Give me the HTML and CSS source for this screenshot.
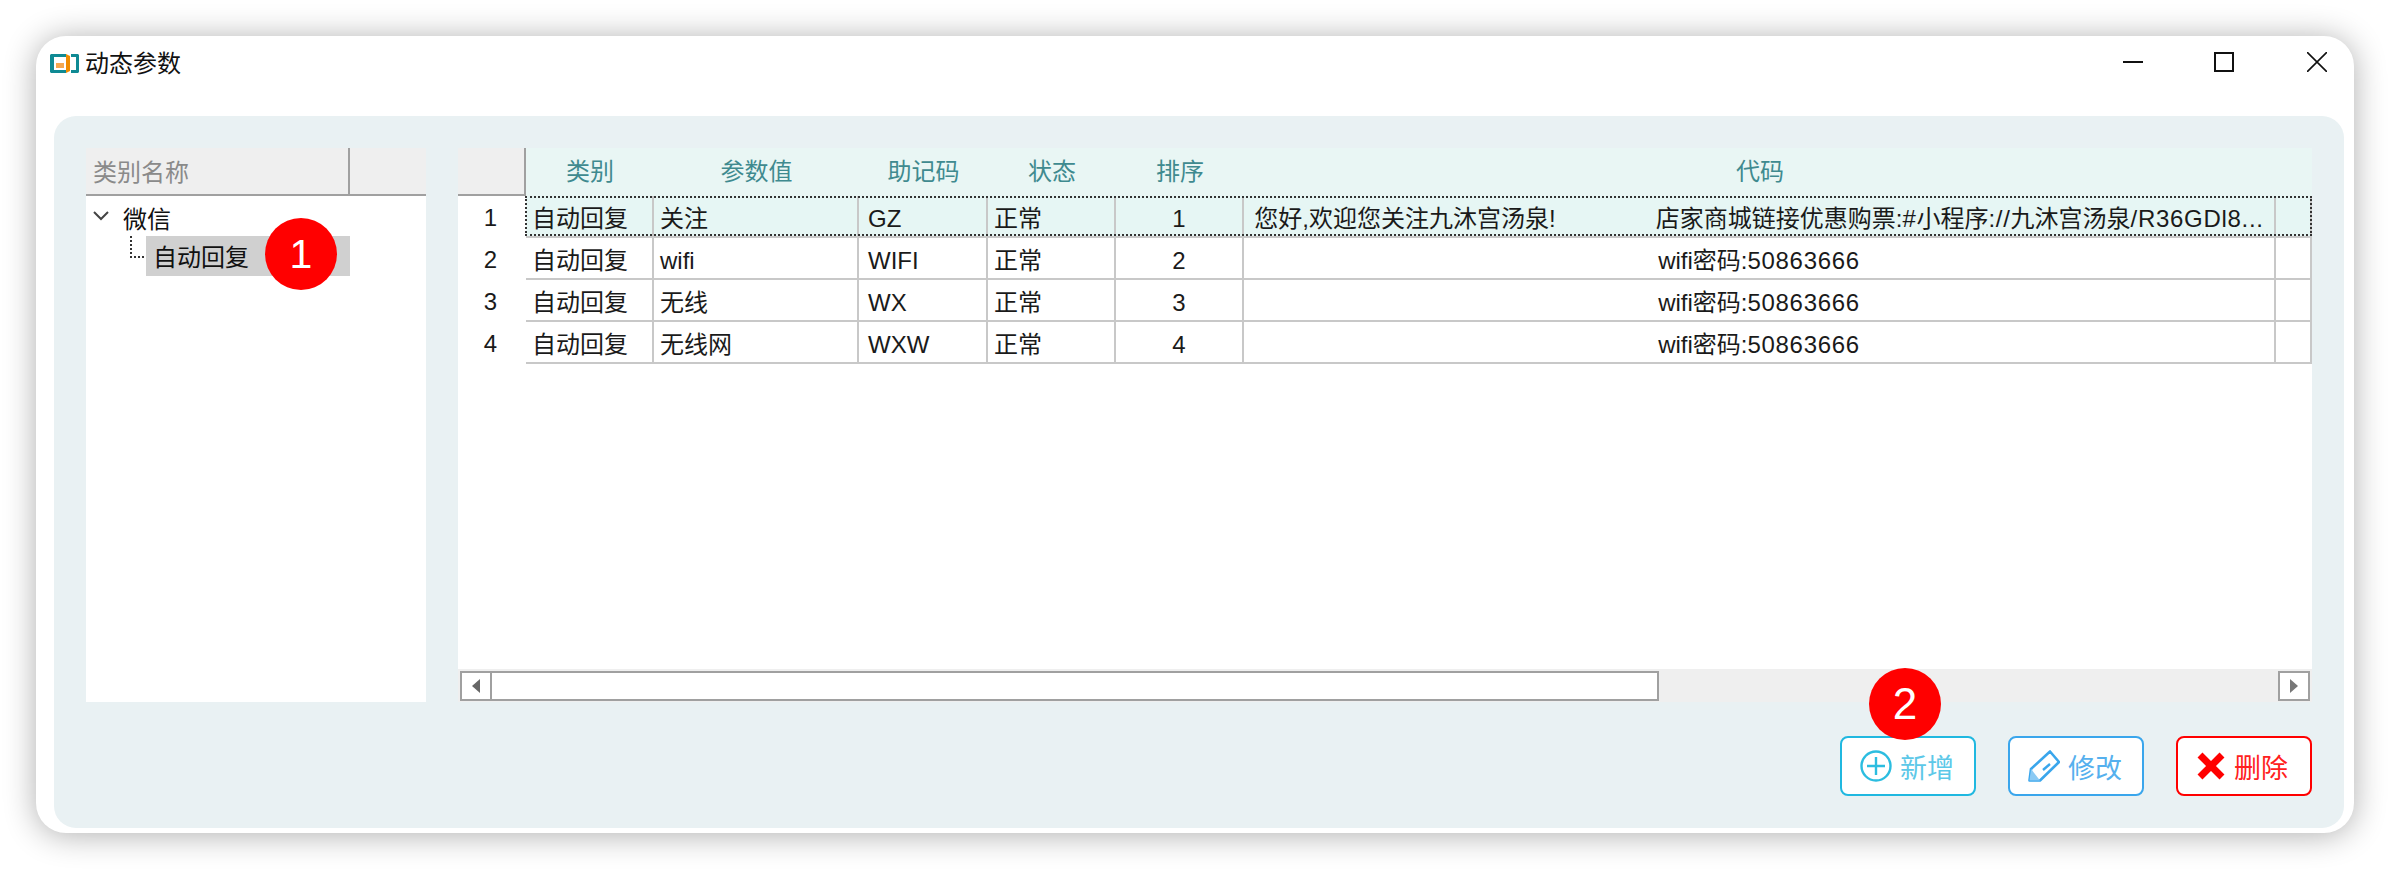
FILE: index.html
```html
<!doctype html>
<html lang="zh-CN">
<head>
    <meta charset="UTF-8">
    <title>动态参数</title>
    <link rel="stylesheet" href="styles.css">
</head>
<body>
    <div class="window">
        <div class="titlebar">
            <svg class="logo" width="29" height="19" viewBox="0 0 29 19">
                <path d="M1 0H16V3H4V16H16V19H1L0 18V1Z" fill="#0f8a94"/>
                <path d="M16 0L20 2V17L16 19Z" fill="#f08c00"/>
                <path d="M21 0H28L29 1V18L28 19H21V16H26V3H21Z" fill="#0f8a94"/>
                <rect x="6" y="9" width="8" height="5" fill="#f5a850"/>
            </svg>
            <span class="title">动态参数</span>
            <div class="controls">
                <svg width="20" height="20" viewBox="0 0 20 20"><path d="M0 10H20" stroke="#111" stroke-width="2"/></svg>
                <svg width="20" height="20" viewBox="0 0 20 20"><rect x="1" y="1" width="18" height="18" fill="none" stroke="#111" stroke-width="2"/></svg>
                <svg class="close" width="20" height="20" viewBox="0 0 20 20"><path d="M0 0L20 20M20 0L0 20" stroke="#111" stroke-width="1.6"/></svg>
            </div>
        </div>
        <div class="panel">
            <div class="content">
                <div class="tree">
                    <div class="tree-head">
                        <div class="tree-col">类别名称</div>
                    </div>
                    <div class="node">
                        <svg class="chevron" width="16" height="10" viewBox="0 0 16 10"><path d="M1 1L8 8L15 1" fill="none" stroke="#444" stroke-width="2"/></svg>
                        <span>微信</span>
                    </div>
                    <div class="node-child">
                        <span class="dots"></span>
                        <div class="node-selected">
                            自动回复
                            <span class="badge badge-one">1</span>
                        </div>
                    </div>
                </div>
                <div class="grid">
                    <div class="row head">
                        <div class="corner"></div>
                        <div class="cells">
                            <div>类别</div>
                            <div>参数值</div>
                            <div>助记码</div>
                            <div>状态</div>
                            <div>排序</div>
                            <div>代码</div>
                            <div></div>
                        </div>
                    </div>
                    <div class="row current">
                        <div class="num">1</div>
                        <div class="cells">
                            <div>自动回复</div>
                            <div>关注</div>
                            <div>GZ</div>
                            <div>正常</div>
                            <div class="mid">1</div>
                            <div class="mid">您好,欢迎您关注九沐宫汤泉!               店家商城链接优惠购票:<span class="wide">#</span>小程序<span class="wide">://</span>九沐宫汤泉<span class="wide">/R36GDl8...</span></div>
                            <div></div>
                        </div>
                    </div>
                    <div class="row">
                        <div class="num">2</div>
                        <div class="cells">
                            <div>自动回复</div>
                            <div>wifi</div>
                            <div>WIFI</div>
                            <div>正常</div>
                            <div class="mid">2</div>
                            <div class="mid">wifi密码:<span class="wide">50863666</span></div>
                            <div></div>
                        </div>
                    </div>
                    <div class="row">
                        <div class="num">3</div>
                        <div class="cells">
                            <div>自动回复</div>
                            <div>无线</div>
                            <div>WX</div>
                            <div>正常</div>
                            <div class="mid">3</div>
                            <div class="mid">wifi密码:<span class="wide">50863666</span></div>
                            <div></div>
                        </div>
                    </div>
                    <div class="row">
                        <div class="num">4</div>
                        <div class="cells">
                            <div>自动回复</div>
                            <div>无线网</div>
                            <div>WXW</div>
                            <div>正常</div>
                            <div class="mid">4</div>
                            <div class="mid">wifi密码:<span class="wide">50863666</span></div>
                            <div></div>
                        </div>
                    </div>
                    <div class="grid-fill"></div>
                    <div class="scrollbar">
                        <div class="scroll-btn">
                            <svg width="8" height="14" viewBox="0 0 8 14"><path d="M8 0V14L0 7Z" fill="#666"/></svg>
                        </div>
                        <div class="scroll-thumb"></div>
                        <div class="scroll-btn scroll-end">
                            <svg width="8" height="14" viewBox="0 0 8 14"><path d="M0 0V14L8 7Z" fill="#777"/></svg>
                        </div>
                    </div>
                </div>
            </div>
            <div class="actions">
                <button class="btn btn-add">
                    <svg width="32" height="32" viewBox="0 0 32 32"><circle cx="16" cy="16" r="14.5" fill="none" stroke="#2bbde0" stroke-width="2.4"/><path d="M16 7V25M7 16H25" stroke="#2bbde0" stroke-width="2.4"/></svg>
                    新增
                    <span class="badge badge-two">2</span>
                </button>
                <button class="btn btn-edit">
                    <svg width="32" height="32" viewBox="0 0 32 32"><path d="M1.5 30.5L3 19L22 1.5L31 12L12 30.5Z" fill="none" stroke="#3aa6ec" stroke-width="2.6" stroke-linejoin="round"/><path d="M3 19L12 30.5L1.5 30.5Z" fill="#8ccaf4"/><path d="M15 20L22 14" fill="none" stroke="#3aa6ec" stroke-width="2.4"/></svg>
                    修改
                </button>
                <button class="btn btn-del">
                    <svg width="30" height="30" viewBox="0 0 30 30"><path d="M4 4L26 26M26 4L4 26" stroke="#ff0000" stroke-width="7"/></svg>
                    删除
                </button>
            </div>
        </div>
    </div>
</body>
</html>
```

FILE: styles.css
```css
*{
    box-sizing: border-box;
}
body{
    margin: 0;
    min-height: 870px;
    padding: 36px 0 0 36px;
    background: #ffffff;
    font-family: "Liberation Sans", "Noto Sans CJK SC", sans-serif;
    font-size: 24px;
    color: #1a1a1a;
}
.window{
    width: 2318px;
    height: 797px;
    padding: 0 10px 5px 18px;
    background: #ffffff;
    border-radius: 30px;
    box-shadow: 0 2px 32px rgba(0, 0, 0, 0.32);
    display: flex;
    flex-direction: column;
}
.titlebar{
    height: 80px;
    display: flex;
    align-items: flex-start;
}
.logo{
    margin: 18px 6px 0 -4px;
}
.title{
    margin-top: 16px;
    line-height: 24px;
    color: #111111;
}
.controls{
    margin: 0 17px 0 auto;
    padding-top: 16px;
    display: flex;
    gap: 71px;
}
.controls svg{
    display: block;
}
.controls .close{
    margin-left: 2px;
}
.panel{
    flex: 1;
    padding: 32px;
    background: #e9f1f3;
    border-radius: 22px;
    display: flex;
    flex-direction: column;
}
.content{
    height: 554px;
    display: flex;
    gap: 32px;
}

/* 左侧树 */
.tree{
    width: 340px;
    background: #ffffff;
}
.tree-head{
    height: 48px;
    background: #efefef;
    border-bottom: 2px solid #a0a0a0;
}
.tree-col{
    width: 264px;
    height: 46px;
    padding: 11px 0 0 7px;
    line-height: 28px;
    color: #8a8a8a;
    border-right: 2px solid #a0a0a0;
}
.node{
    height: 40px;
    padding-left: 7px;
    display: flex;
    align-items: center;
    gap: 14px;
    color: #111111;
}
.node span{
    padding-top: 2px;
}
.node-child{
    height: 40px;
    display: flex;
}
.dots{
    width: 14px;
    height: 22px;
    margin: 0 2px 0 44px;
    border-left: 2px dotted #333333;
    border-bottom: 2px dotted #333333;
}
.node-selected{
    position: relative;
    width: 204px;
    height: 40px;
    padding-left: 7px;
    line-height: 43px;
    background: #d0d0d0;
    color: #111111;
}
.badge{
    position: absolute;
    width: 72px;
    height: 72px;
    border-radius: 50%;
    background: #ff0000;
    color: #ffffff;
    font-family: "Liberation Sans", sans-serif;
    font-size: 44px;
    line-height: 72px;
    text-align: center;
}
.badge-one{
    left: 119px;
    top: -18px;
    font-size: 41px;
}
.badge-two{
    left: 27px;
    top: -70px;
}

/* 右侧表格 */
.grid{
    flex: 1;
    background: #ffffff;
    display: flex;
    flex-direction: column;
}
.row{
    display: flex;
    height: 42px;
}
.cells{
    position: relative;
    flex: 1;
    display: grid;
    grid-template-columns: 128px 205px 129px 128px 128px 1032px 36px;
}
.cells div{
    padding: 0 6px;
    line-height: 45px;
    white-space: pre;
    overflow: hidden;
    border-right: 2px solid #c8c8c8;
    border-bottom: 2px solid #c8c8c8;
}
.cells div:nth-child(3){
    padding-left: 9px;
}
.cells .mid{
    text-align: center;
}
.wide{
    letter-spacing: 0.7px;
}
.num,
.corner{
    width: 68px;
    padding-right: 3px;
    line-height: 44px;
    text-align: center;
}
.head{
    height: 48px;
    background: #e9f6f4;
}
.head .corner{
    background: #efefef;
    border-right: 2px solid #a0a0a0;
    border-bottom: 2px solid #a0a0a0;
}
.head .cells div{
    padding: 0;
    border: none;
    line-height: 48px;
    text-align: center;
    color: #3f8a8f;
}
.current .cells{
    background: #e6f6f4;
}
.current .cells::after{
    content: "";
    position: absolute;
    left: -1px;
    right: 0;
    top: 0;
    bottom: 2px;
    border: 2px dotted #333333;
}
.grid-fill{
    flex: 1;
}
.scrollbar{
    height: 33px;
    padding: 2px 2px 1px;
    background: #efefef;
    display: flex;
}
.scroll-btn{
    width: 32px;
    background: #ffffff;
    border: 2px solid #a0a0a0;
    display: flex;
    align-items: center;
    justify-content: center;
}
.scroll-thumb{
    width: 1167px;
    background: #ffffff;
    border: 2px solid #a0a0a0;
    border-left: none;
}
.scroll-end{
    margin-left: auto;
}

/* 底部按钮 */
.actions{
    margin-top: 34px;
    display: flex;
    justify-content: flex-end;
    gap: 32px;
}
.btn{
    position: relative;
    width: 136px;
    height: 60px;
    padding: 0 0 0 18px;
    background: #ffffff;
    border: 2px solid;
    border-radius: 8px;
    font-family: inherit;
    font-size: 27px;
    display: flex;
    align-items: center;
    gap: 8px;
}
.btn-add{
    color: #5cc8e8;
    border-color: #20b8e0;
}
.btn-edit{
    color: #55b0ee;
    border-color: #3aa6ec;
}
.btn-del{
    color: #ff2020;
    border-color: #ff0000;
}
```
